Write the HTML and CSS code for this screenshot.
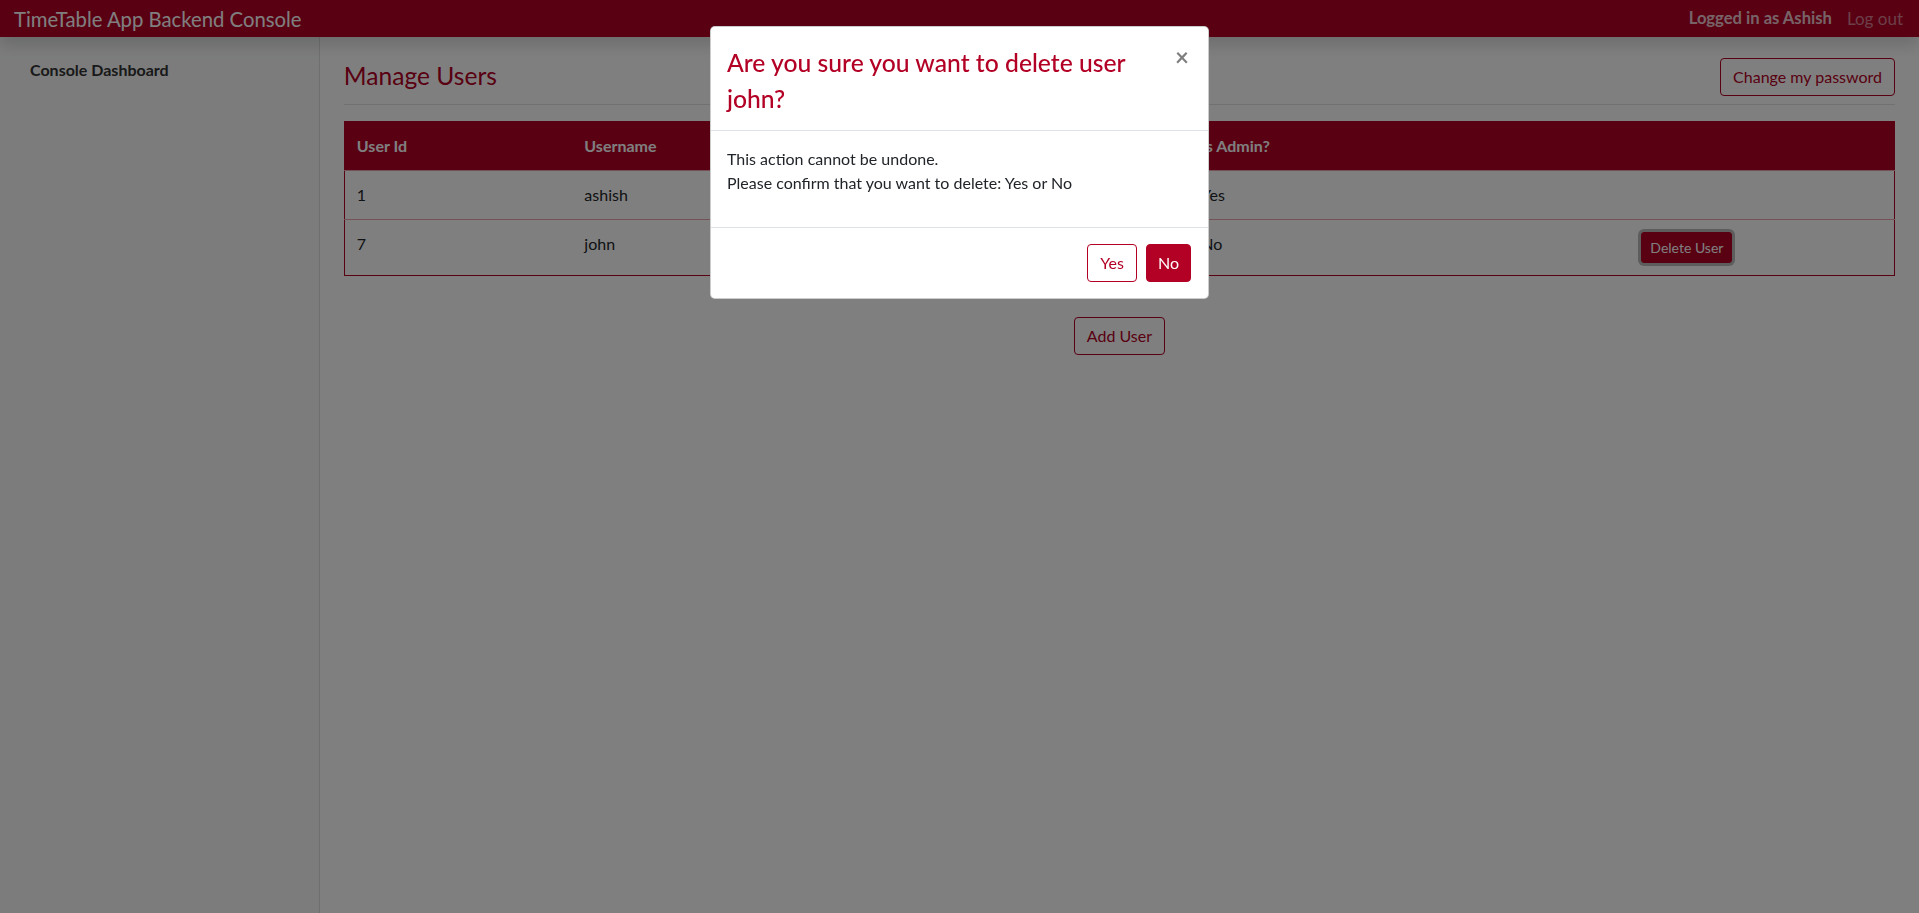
FILE: index.html
```html
<!DOCTYPE html>
<html lang="en">
<head>
<meta charset="utf-8">
<title>TimeTable App Backend Console</title>
<link rel="stylesheet" href="styles.css">
</head>
<body>
<div class="app">
  <nav class="navbar">
    <span class="brand">TimeTable App Backend Console</span>
    <div class="nav-right">
      <span class="logged">Logged in as Ashish</span>
      <span class="logout">Log out</span>
    </div>
  </nav>
  <div class="layout">
    <aside class="sidebar">
      <span class="side-link">Console Dashboard</span>
    </aside>
    <main class="main">
      <div class="page-head">
        <h1 class="page-title">Manage Users</h1>
        <button class="btn btn-outline">Change my password</button>
      </div>
      <table class="users">
        <colgroup>
          <col class="c1"><col class="c2"><col class="c3"><col class="c4"><col class="c5">
        </colgroup>
        <thead>
          <tr><th>User Id</th><th>Username</th><th></th><th>Is Admin?</th><th></th></tr>
        </thead>
        <tbody>
          <tr><td>1</td><td>ashish</td><td></td><td>Yes</td><td></td></tr>
          <tr><td>7</td><td>john</td><td></td><td>No</td><td><button class="btn btn-sm btn-fill btn-focus">Delete User</button></td></tr>
        </tbody>
      </table>
      <div class="add-row">
        <button class="btn btn-outline">Add User</button>
      </div>
    </main>
  </div>
</div>
<div class="backdrop"></div>
<div class="modal-layer">
  <div class="modal">
    <div class="modal-header">
      <h4 class="modal-title">Are you sure you want to delete user john?</h4>
      <span class="close">&times;</span>
    </div>
    <div class="modal-body">
      <p>This action cannot be undone.<br>Please confirm that you want to delete: Yes or No</p>
    </div>
    <div class="modal-footer">
      <button class="btn btn-outline btn-yes">Yes</button>
      <button class="btn btn-fill btn-no">No</button>
    </div>
  </div>
</div>
</body>
</html>
```
FILE: styles.css
```css
* { box-sizing: border-box; }
html, body { margin: 0; height: 100%; }
body {
  font-family: "Lato", "Noto Sans", "Liberation Sans", sans-serif;
  font-size: 16px;
  line-height: 1.5;
  color: #212529;
  background: #fff;
}
.app { display: flex; flex-direction: column; height: 100vh; }
.navbar {
  position: relative;
  z-index: 2;
  height: 37px;
  flex: 0 0 37px;
  background: #b30025;
  display: flex;
  align-items: center;
  justify-content: space-between;
  padding: 0 16px 0 14px;
  box-shadow: 0 8px 16px rgba(0,0,0,.15);
}
.brand { color: #fff; font-size: 20.3px; line-height: 30px; }
.nav-right { display: flex; gap: 15px; align-items: center; }
.logged { color: rgba(255,255,255,.8); font-weight: 700; font-size: 16.6px; }
.logout { color: rgba(255,255,255,.5); font-size: 17px; }
.layout { flex: 1; display: flex; min-height: 0; }
.sidebar {
  flex: 0 0 16.6667%;
  background: #f8f9fa;
  box-shadow: inset -1px 0 0 rgba(0,0,0,.1);
  padding: 21px 0 0 30px;
}
.side-link { font-weight: 700; color: #333; font-size: 16px; }
.main { flex: 1; padding: 5px 24px 0; }
.page-head {
  display: flex;
  justify-content: space-between;
  align-items: center;
  padding: 16px 0 8px;
  border-bottom: 1px solid #dee2e6;
  margin-bottom: 16px;
}
.page-title { margin: 0 0 2px; font-size: 24.6px; font-weight: 400; line-height: 1.2; color: #b30025; }
.btn {
  font-family: inherit;
  font-size: 16px;
  line-height: 24px;
  padding: 6px 12px;
  border-radius: 4px;
  border: 1px solid #b30025;
  cursor: pointer;
}
.btn-outline { background: #fff; color: #b30025; }
.btn-fill { background: #b30025; color: #fff; }
.btn-sm { font-size: 14px; line-height: 21px; padding: 4px 8px; border-radius: 3px; }
.btn-focus { box-shadow: 0 0 0 3px rgba(170,170,170,.8); }
.users {
  width: 100%;
  border-collapse: collapse;
  border: 1px solid #b30025;
  table-layout: fixed;
}
.c1 { width: 228px; }
.c2 { width: 228px; }
.c3 { width: 389px; }
.c4 { width: 440px; }
.users th, .users td {
  text-align: left;
  padding: 12px;
  vertical-align: top;
}
.users th { background: #b30025; color: #fff; font-weight: 700; border-bottom: 1px solid #e6a3ae; }
.users td { border-top: 1px solid #e6a3ae; }
.add-row { display: flex; justify-content: center; margin-top: 41px; }
.backdrop { position: fixed; inset: 0; background: rgba(0,0,0,.5); z-index: 10; }
.modal-layer { position: fixed; inset: 0; z-index: 11; display: flex; justify-content: center; align-items: flex-start; }
.modal {
  width: 499px;
  margin-top: 26px;
  background: #fff;
  border: 1px solid rgba(0,0,0,.2);
  border-radius: 5px;
}
.modal-header {
  display: flex;
  align-items: flex-start;
  padding: 15px 16px 13px;
  border-bottom: 1px solid #dee2e6;
}
.modal-title { flex: 1; margin: 0; padding-top: 3px; font-size: 24.7px; font-weight: 500; line-height: 36px; color: #b30025; }
.close {
  font-size: 24px;
  font-weight: 700;
  line-height: 1;
  color: #000;
  opacity: .5;
  padding: 3px 3px 0 32px;
}
.modal-body { padding: 16px; }
.modal-body p { margin: 0 0 16px; }
.modal-footer {
  display: flex;
  justify-content: flex-end;
  gap: 9px;
  padding: 16px 17px 16px 16px;
  border-top: 1px solid #dee2e6;
}
.btn-yes { padding: 6px 12px; }
.btn-no { padding: 6px 11px; }
```
